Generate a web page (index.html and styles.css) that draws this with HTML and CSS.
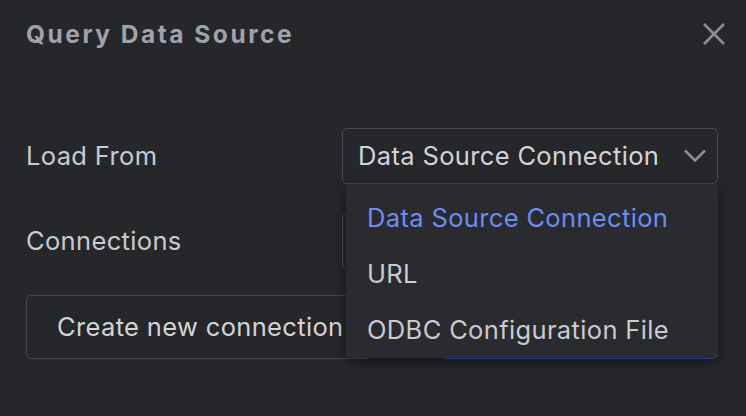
FILE: index.html
```html
<!DOCTYPE html>
<html>
<head>
<meta charset="utf-8">
<link rel="stylesheet" href="styles.css">
</head>
<body>
<div class="dialog">
  <div class="header">
    <h1 class="title">Query Data Source</h1>
    <button class="close" aria-label="Close">
      <svg width="24" height="24" viewBox="0 0 24 24"><path d="M2 2 L22 22 M22 2 L2 22" stroke="#8b8c94" stroke-width="2.6" fill="none"/></svg>
    </button>
  </div>
  <div class="form">
    <div class="row">
      <div class="label">Load From</div>
      <div class="control">
        <div class="select">
          <span class="value">Data Source Connection</span>
          <svg class="chev" width="24" height="14" viewBox="0 0 24 14"><path d="M2 1.5 L12 11.5 L22 1.5" stroke="#8b8c94" stroke-width="2.6" fill="none"/></svg>
        </div>
        <ul class="menu">
          <li class="item active">Data Source Connection</li>
          <li class="item">URL</li>
          <li class="item">ODBC Configuration File</li>
        </ul>
      </div>
    </div>
    <div class="row">
      <div class="label">Connections</div>
      <div class="control">
        <div class="select"></div>
      </div>
    </div>
    <div class="buttons">
      <button class="btn">Create new connection</button>
      <button class="btn primary" aria-label="Select connection"></button>
    </div>
  </div>
</div>
</body>
</html>
```
FILE: styles.css
```css
* { box-sizing: border-box; }
html, body { margin: 0; padding: 0; }
body {
  background: #26272b;
  font-family: Inter, "Noto Sans", sans-serif;
  width: 746px;
  height: 416px;
  overflow: hidden;
}
.dialog {
  padding: 17px 28px 0 26px;
}
.header {
  display: flex;
  justify-content: space-between;
  align-items: center;
  height: 34px;
}
.title {
  margin: 0;
  font-size: 24.5px;
  font-weight: 700;
  letter-spacing: 2.5px;
  color: #a1a1ab;
}
.close {
  background: none;
  border: none;
  padding: 0;
  width: 24px;
  height: 24px;
  margin-right: -8px;
  display: flex;
}
.form {
  margin-top: 77px;
  display: flex;
  flex-direction: column;
}
.row {
  display: flex;
  align-items: center;
  height: 56px;
  margin-bottom: 29px;
}
.row + .row { margin-bottom: 26px; }
.label {
  width: 316px;
  font-size: 25.5px;
  letter-spacing: 0.35px;
  color: #c9c9ce;
  margin-top: -2px;
}
.control {
  flex: 1;
  position: relative;
  height: 56px;
}
.select {
  height: 56px;
  border: 1.5px solid #4a4b51;
  border-radius: 5px;
  display: flex;
  align-items: center;
  justify-content: space-between;
  padding: 0 10px 0 15px;
}
.value {
  font-size: 25.5px;
  letter-spacing: 0.35px;
  color: #d3d3d7;
  margin-top: -2px;
}
.menu {
  position: absolute;
  left: 4px;
  right: 0;
  top: 56px;
  margin: 0;
  padding: 6px 0 0;
  list-style: none;
  background: #2a2b2f;
  border-radius: 0 0 5px 5px;
  box-shadow: 0 4px 14px rgba(0,0,0,0.45);
  z-index: 5;
}
.item {
  height: 56px;
  display: flex;
  align-items: center;
  padding-left: 21px;
  padding-bottom: 2px;
  font-size: 25.5px;
  letter-spacing: 0.35px;
  color: #c9c9ce;
}
.item.active { color: #6e8cf0; }
.buttons {
  display: flex;
  gap: 71px;
}
.btn {
  height: 64px;
  border: 1.5px solid #46474c;
  border-radius: 5px;
  background: transparent;
  color: #d3d3d7;
  font-family: inherit;
  font-size: 25.5px;
  letter-spacing: 0.35px;
  padding: 0 30px 2px;
  width: 346px;
  text-align: left;
  white-space: nowrap;
}
.btn.primary {
  flex: 1;
  width: auto;
  border-color: #3d51c9;
  background: #26272b;
}
```
